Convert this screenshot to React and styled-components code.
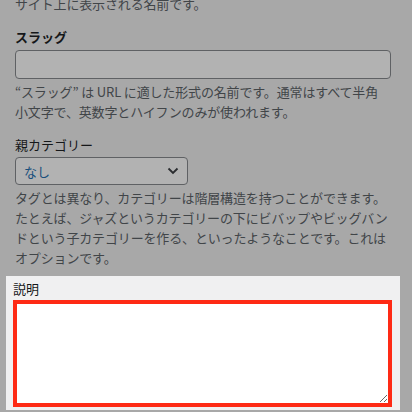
import React from "react";
import styled, { createGlobalStyle } from "styled-components";

const GlobalStyle = createGlobalStyle`
  html, body {
    margin: 0;
    padding: 0;
    background: #a8a8a8;
    overflow: hidden;
  }
  body {
    font-family: "Noto Sans CJK JP", "Noto Sans", sans-serif;
    -webkit-font-smoothing: antialiased;
  }
`;

const Page = styled.div`
  width: 412px;
  height: 412px;
  overflow: hidden;
  background: #a8a8a8;
`;

const Form = styled.div`
  padding: 0 0 0 15px;
  margin-top: -6px;
`;

const Field = styled.div`
  display: flex;
  flex-direction: column;
  margin-top: ${(p) => p.$top || 0}px;
`;

const Label = styled.label`
  display: block;
  font-size: 13px;
  line-height: 20px;
  height: 20px;
  color: #151719;
  font-weight: ${(p) => (p.$bold ? 600 : 400)};
`;

const Hint = styled.p`
  margin: ${(p) => p.$top || 0}px 0 0;
  font-size: 13px;
  line-height: 20px;
  color: #414548;
  letter-spacing: -0.15px;
  white-space: nowrap;
`;

const TextInput = styled.div`
  box-sizing: border-box;
  margin-top: 3px;
  width: 376px;
  height: 29px;
  border: 1px solid #5f6164;
  border-radius: 4px;
  background: #b2b2b2;
`;

const Select = styled.div`
  box-sizing: border-box;
  margin-top: 2px;
  width: 173px;
  height: 28px;
  border: 1px solid #5f6164;
  border-radius: 4px;
  background: #b2b2b2;
  display: flex;
  align-items: center;
  justify-content: space-between;
  padding: 0 8px 0 8px;
  font-size: 13px;
  color: #184f7c;
`;

const Spotlight = styled.div`
  margin: 8px 12px 0 6px;
  height: 134px;
  background: #f0f0f1;
  padding: 3px 8px 0 7px;
  box-sizing: border-box;
`;

const Textarea = styled.textarea`
  display: block;
  box-sizing: border-box;
  width: 379px;
  height: 107px;
  margin: 1px 0 0;
  border: 4px solid #fe2a15;
  border-radius: 0;
  background: #fff;
  outline: none;
  resize: both;
`;

export default function App() {
  return (
    <Page>
      <GlobalStyle />
      <Form>
        <Hint>サイト上に表示される名前です。</Hint>

        <Field $top={13}>
          <Label $bold>スラッグ</Label>
          <TextInput />
          <Hint $top={3}>
            “スラッグ” は URL に適した形式の名前です。通常はすべて半角
            <br />
            小文字で、英数字とハイフンのみが使われます。
          </Hint>
        </Field>

        <Field $top={13}>
          <Label>親カテゴリー</Label>
          <Select>
            <span>なし</span>
            <svg width="12" height="8" viewBox="0 0 12 8">
              <path d="M1.5 1.5 L6 6 L10.5 1.5" fill="none" stroke="#2a2c2f" strokeWidth="1.8" />
            </svg>
          </Select>
          <Hint $top={3}>
            タグとは異なり、カテゴリーは階層構造を持つことができます。
            <br />
            たとえば、ジャズというカテゴリーの下にビバップやビッグバン
            <br />
            ドという子カテゴリーを作る、といったようなことです。これは
            <br />
            オプションです。
          </Hint>
        </Field>
      </Form>

      <Spotlight>
        <Label>説明</Label>
        <Textarea />
      </Spotlight>
    </Page>
  );
}
